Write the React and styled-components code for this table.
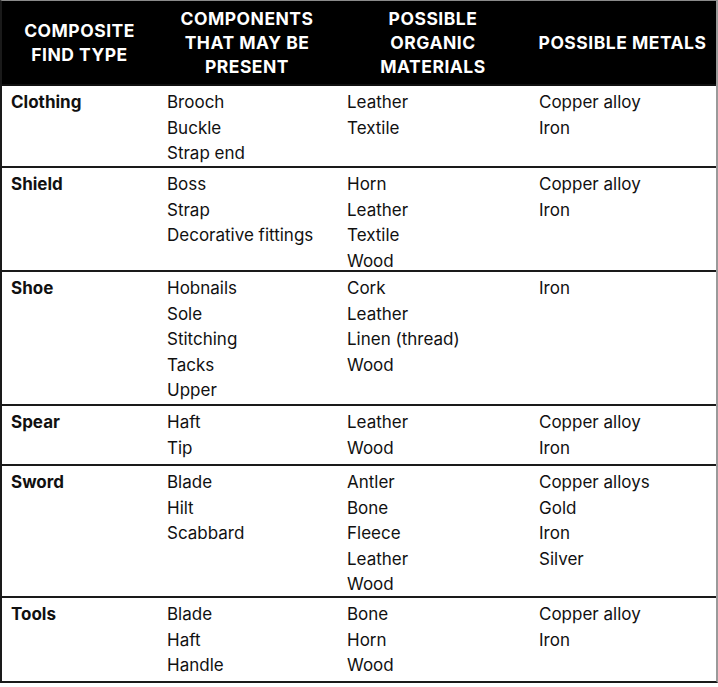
import React from 'react'
import styled, { createGlobalStyle } from 'styled-components'

const GlobalStyle = createGlobalStyle`
    html, body {
        margin: 0;
        padding: 0;
        background: #ffffff;
    }
    body {
        font-family: Inter, "Open Sans", "Liberation Sans", sans-serif;
        color: #111111;
    }
`

const Table = styled.div`
    width: 718px;
    box-sizing: border-box;
    border: 2px solid #1a1a1a;
    border-top: 1px solid #8a8a8a;
    border-right: 2px solid #9a9a9a;
    margin-bottom: 4px;
`

const Columns = styled.div`
    display: grid;
    grid-template-columns: 155px 180px 192px 1fr;
`

const HeadRow = styled(Columns)`
    background-color: #000000;
    height: 83px;
    border-bottom: 2px solid #111111;
`

const HeadCell = styled.div`
    display: flex;
    align-items: center;
    justify-content: center;
    text-align: center;
    color: #ffffff;
    font-weight: 700;
    font-size: 17.5px;
    line-height: 24px;
    letter-spacing: 0.5px;
    white-space: pre-line;
`

const Row = styled(Columns)`
    height: ${props => props.h}px;
    box-sizing: border-box;
    padding-top: 4px;
    border-top: ${props => props.first ? 'none' : '2px solid #1a1a1a'};
`

const Cell = styled.div`
    padding-left: ${props => props.first ? 9 : 10}px;
    font-size: 17px;
    line-height: 25.5px;
    font-weight: ${props => props.first ? 700 : 400};
`

const Line = styled.div`
    white-space: nowrap;
`

const headers = [
    'COMPOSITE\nFIND TYPE',
    'COMPONENTS\nTHAT MAY BE\nPRESENT',
    'POSSIBLE\nORGANIC\nMATERIALS',
    'POSSIBLE METALS',
]

const rows = [
    { h: 80, type: 'Clothing', parts: ['Brooch', 'Buckle', 'Strap end'], organic: ['Leather', 'Textile'], metals: ['Copper alloy', 'Iron'] },
    { h: 104, type: 'Shield', parts: ['Boss', 'Strap', 'Decorative fittings'], organic: ['Horn', 'Leather', 'Textile', 'Wood'], metals: ['Copper alloy', 'Iron'] },
    { h: 134, type: 'Shoe', parts: ['Hobnails', 'Sole', 'Stitching', 'Tacks', 'Upper'], organic: ['Cork', 'Leather', 'Linen (thread)', 'Wood'], metals: ['Iron'] },
    { h: 60, type: 'Spear', parts: ['Haft', 'Tip'], organic: ['Leather', 'Wood'], metals: ['Copper alloy', 'Iron'] },
    { h: 132, type: 'Sword', parts: ['Blade', 'Hilt', 'Scabbard'], organic: ['Antler', 'Bone', 'Fleece', 'Leather', 'Wood'], metals: ['Copper alloys', 'Gold', 'Iron', 'Silver'] },
    { h: 85, type: 'Tools', parts: ['Blade', 'Haft', 'Handle'], organic: ['Bone', 'Horn', 'Wood'], metals: ['Copper alloy', 'Iron'] },
]

function Lines({ items }) {
    return items.map(item => <Line key={item}>{item}</Line>)
}

export default function App() {
    return (
        <>
            <GlobalStyle />
            <Table>
                <HeadRow>
                    {headers.map(h => <HeadCell key={h}>{h}</HeadCell>)}
                </HeadRow>
                {rows.map((row, i) => (
                    <Row key={row.type} h={row.h} first={i === 0}>
                        <Cell first>{row.type}</Cell>
                        <Cell><Lines items={row.parts} /></Cell>
                        <Cell><Lines items={row.organic} /></Cell>
                        <Cell><Lines items={row.metals} /></Cell>
                    </Row>
                ))}
            </Table>
        </>
    )
}
